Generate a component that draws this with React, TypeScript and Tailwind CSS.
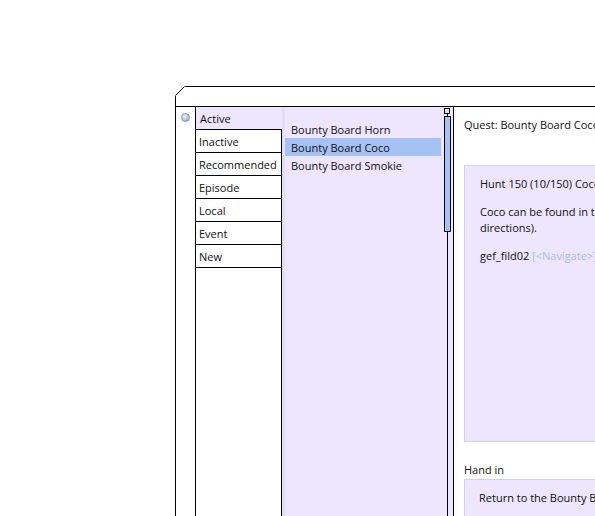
import React from "react";

const tabs = ["Inactive", "Recommended", "Episode", "Local", "Event", "New"];
const items = ["Bounty Board Horn", "Bounty Board Coco", "Bounty Board Smokie"];

export default function App() {
  return (
    <div
      className="w-[595px] h-[516px] overflow-hidden bg-white relative text-[11px] text-[#111]"
      style={{ fontFamily: '"Open Sans", "Noto Sans", sans-serif' }}
    >
      <div className="ml-[175px] mt-[86px] w-[700px] h-[480px] border-l border-t border-black relative">
        <svg className="absolute -left-px -top-px" width="11" height="11" viewBox="0 0 11 11">
          <polygon points="0,0 10.5,0 0,10.5" fill="white" />
          <line x1="0.5" y1="9.5" x2="9.5" y2="0.5" stroke="black" strokeWidth="1" />
        </svg>
        <div className="h-[19px]" />
        <div className="flex h-[440px] border-t border-black">
          <div className="w-[19px] flex justify-center pt-[6px]">
            <div
              className="w-[9px] h-[9px] rounded-full border border-[#8a94a8]"
              style={{ background: "radial-gradient(circle at 35% 35%, #eef4ff 0%, #a7c0ec 60%, #7f98cc 100%)" }}
            />
          </div>
          <div className="w-[87px] border-l border-black flex flex-col">
            <div className="h-[22px] bg-[#ede6fe] flex items-center pl-[4px] pt-[2px]">Active</div>
            <div className="flex-1 border-t border-r border-black flex flex-col">
              {tabs.map((t) => (
                <div key={t} className="h-[23px] border-b border-black flex items-center pl-[3px] pt-[2px]">
                  {t}
                </div>
              ))}
            </div>
          </div>
          <div className="w-[172px] bg-[#ede6fe] border-r border-black flex">
            <div className="w-[3px] bg-[#e4dcf8]" />
            <div className="w-[156px] pt-[13px] flex flex-col">
              {items.map((it, i) => (
                <div
                  key={it}
                  className={`h-[18px] flex items-center pl-[6px] pt-[2px] ${i === 1 ? "bg-[#a5c2f4]" : ""}`}
                >
                  {it}
                </div>
              ))}
            </div>
            <div className="w-[12px] flex flex-col items-center pt-[1px]">
              <div className="w-[6px] h-[6px] border border-black bg-[#d8e4fb]" />
              <div className="w-px h-[2px] bg-black" />
              <div className="w-[7px] h-[116px] border border-black bg-[#a5c2f4]" />
              <div className="w-px flex-1 bg-black" />
            </div>
          </div>
          <div className="flex-1 bg-white pl-[10px] pt-[10px]">
            <div className="h-[16px] leading-[16px]">Quest: Bounty Board Coco</div>
            <div className="mt-[32px] h-[277px] border border-[#d6cfe8] bg-[#ede6fe] pl-[15px] pt-[10px] leading-[16px] whitespace-nowrap">
              <div>Hunt 150 (10/150) Coco on the field.</div>
              <div className="mt-[12px]">Coco can be found in the following area (click for</div>
              <div>directions).</div>
              <div className="mt-[12px]">
                gef_fild02 <span className="text-[#a6bdf0]">[&lt;Navigate&gt;]</span>
              </div>
            </div>
            <div className="mt-[20px] h-[16px] leading-[16px]">Hand in</div>
            <div className="mt-[1px] h-[60px] border border-[#d6cfe8] bg-[#ede6fe] pl-[14px] pt-[10px] leading-[16px] whitespace-nowrap">
              Return to the Bounty Board.
            </div>
          </div>
        </div>
      </div>
    </div>
  );
}
